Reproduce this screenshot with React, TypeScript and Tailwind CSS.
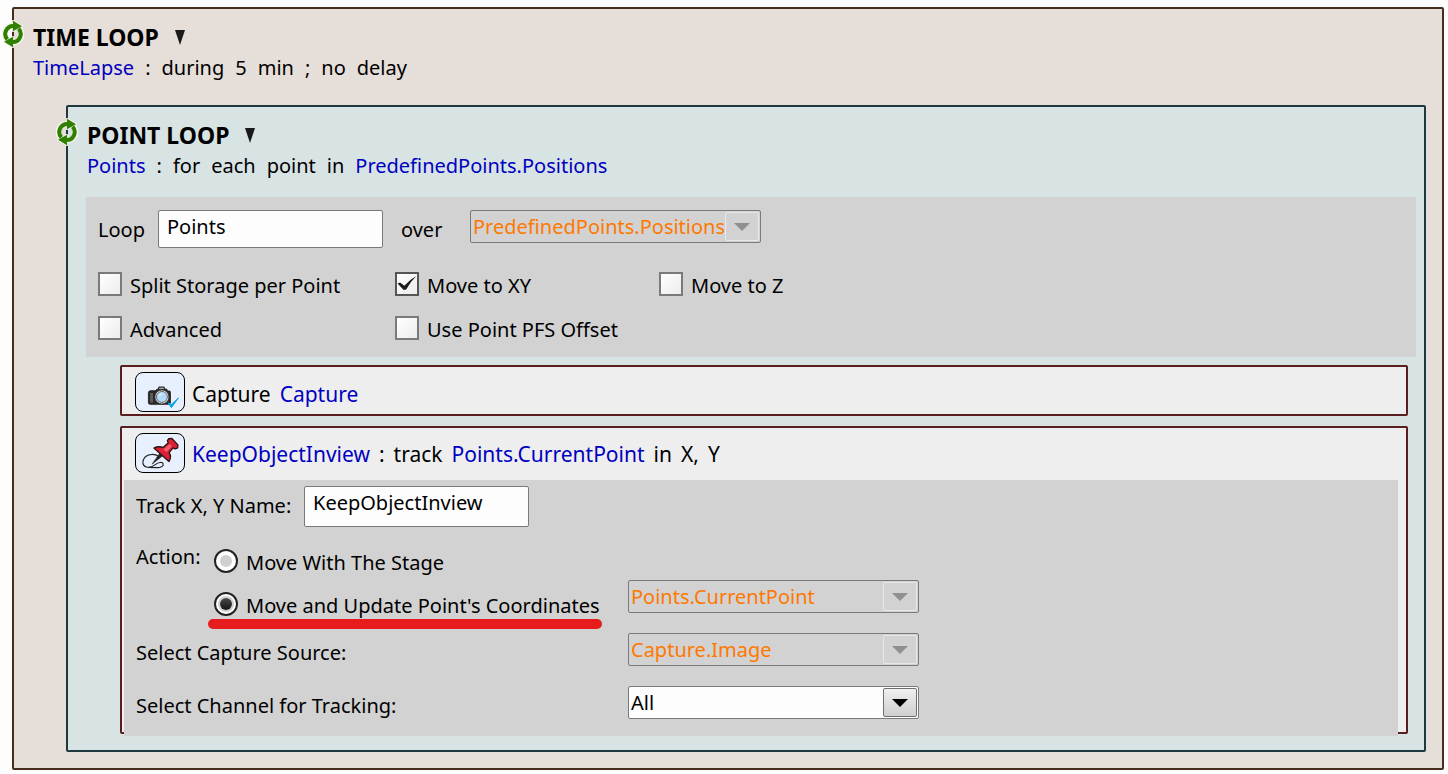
import { Fragment, useState } from "react";
import type { ReactNode } from "react";

function LoopIcon() {
  return (
    <svg viewBox="0 0 22 28" className="h-7 w-[22px]" aria-hidden="true">
      <g fill="none" stroke="#f4f6ee">
        <path d="M5 19.8 A8 8 0 0 1 11.5 6" strokeWidth="5.6" />
        <path d="M17 8.2 A8 8 0 0 1 10.5 22" strokeWidth="5.6" />
        <path d="M11 0.8 V11.2 L20 6.2 Z M11 27.2 V16.8 L2 21.8 Z" strokeWidth="1.8" strokeLinejoin="round" />
      </g>
      <g fill="none" stroke="#2f8000" strokeWidth="4">
        <path d="M5.4 19.4 A8 8 0 0 1 11.5 6" />
        <path d="M16.6 8.6 A8 8 0 0 1 10.5 22" />
      </g>
      <path d="M11 0.8 V11.2 L20 6.2 Z M11 27.2 V16.8 L2 21.8 Z" fill="#2f8000" />
    </svg>
  );
}

function CameraIcon() {
  return (
    <svg viewBox="0 0 50 40" className="h-full w-full" aria-hidden="true">
      <path d="M23 17.5 L24 14.8 H29 L30.5 17.5" fill="#e8e8e8" stroke="#222" strokeWidth="1.2" />
      <path d="M12.8 20.4 Q13 18.8 15 18.6 H20 L22 17 H32 L33.5 19 H35 Q36 19 36 20.5 V31 Q36 33 34 33 H14.6 Q12.8 33 12.8 31 Z" fill="#2b2b2b" stroke="#111" strokeWidth="0.8" />
      <path d="M14.6 21 H17.6 V31 H14.6 Z" fill="#5c5c5c" />
      <circle cx="27" cy="25.2" r="7.4" fill="#f4f4f4" stroke="#222" strokeWidth="0.8" />
      <circle cx="27" cy="25.2" r="5.8" fill="#b4d8f8" stroke="#444" strokeWidth="0.8" />
      <path d="M23.2 25 Q24 21.4 27.8 21.2 Q26 24 23.2 25 Z" fill="#e4f3ff" />
      <path d="M33.5 31.5 L37 36.5 L44.5 26.2 L37 33 Z" fill="#12a5e8" stroke="#12a5e8" strokeWidth="1" />
    </svg>
  );
}

function PinIcon() {
  return (
    <svg viewBox="0 0 50 40" className="h-full w-full" aria-hidden="true">
      <path d="M24 24 C20 20.6 12.6 20.6 9 24.6 C5.6 28.6 6.4 33.4 10.6 34.8 C14.4 36 18 34 20.4 32 C23 29.8 27.6 29 28.4 31.4 C29 34 25.4 35.6 21.6 35.4 C18.4 35.2 15.6 35.2 13.4 35.2" fill="none" stroke="#222" strokeWidth="1.2" />
      <path d="M16.6 31.8 L24.6 20.4 L27.6 23.2 Z" fill="#222" stroke="#222" strokeWidth="0.6" />
      <path d="M34.2 5 L37.5 4.6 L43.8 11.5 L43.6 14.6 L41 15.6 L38.8 14.6 L34.6 19.6 C36.8 23 36.4 26 34.4 29 L18.6 14.8 C22 13 25.4 13.2 28.2 14.2 L33.6 9.4 L32.8 7 Z" fill="#dc2135" stroke="#2a1214" strokeWidth="1.4" strokeLinejoin="round" />
      <path d="M28.5 16.5 L35 10.5 L37.5 13 L32 19 Z" fill="#f0606a" />
    </svg>
  );
}

function Words({ children }: { children: string }) {
  return (
    <>
      {children.split(" ").map((word, i) => (
        <Fragment key={i}>
          <span>{word}</span>{" "}
        </Fragment>
      ))}
    </>
  );
}

function Name({ children }: { children: ReactNode }) {
  return <span className="text-[#0000c0]">{children}</span>;
}

function LoopHeader({ title, children }: { title: string; children: ReactNode }) {
  return (
    <header>
      <div className="absolute top-[11px] -left-3">
        <LoopIcon />
      </div>
      <div className="flex items-center gap-4">
        <h2 className="text-[23px] leading-[30px] font-bold">{title}</h2>
        <button type="button" aria-label={"Toggle " + title}>
          <svg viewBox="0 0 10 15" className="h-[15px] w-2.5" aria-hidden="true">
            <path d="M0 0 H10 L5 15 Z" fill="#1a1a1a" />
          </svg>
        </button>
      </div>
      <p className="mt-px flex gap-[11px] leading-[30px]">{children}</p>
    </header>
  );
}

function Check({ label, initial = false }: { label: string; initial?: boolean }) {
  const [on, setOn] = useState(initial);
  return (
    <label className="flex h-6 items-center gap-2">
      <span className="relative h-6 w-6 shrink-0">
        <input
          type="checkbox"
          checked={on}
          onChange={() => setOn(!on)}
          className="block h-6 w-6 appearance-none border-2 border-[#7a7a7a] bg-linear-to-br from-white to-[#ececec] checked:border-[#555]"
        />
        {on && (
          <svg viewBox="0 0 24 24" className="pointer-events-none absolute inset-0 h-6 w-6" aria-hidden="true">
            <path d="M2.6 11.6 L5 10.4 L9.4 13.8 Q14 8 21.4 4 Q15 10 11 17.8 H8.4 Z" fill="#1a1a1a" />
          </svg>
        )}
      </span>
      <span className="pt-1 whitespace-nowrap">{label}</span>
    </label>
  );
}

function Radio({ label, checked, onSelect }: { label: string; checked: boolean; onSelect: () => void }) {
  return (
    <label className="flex h-6 items-center gap-2">
      <span className="relative h-6 w-6 shrink-0">
        <input
          type="radio"
          name="action"
          checked={checked}
          onChange={onSelect}
          className="block h-6 w-6 appearance-none rounded-full border-2 border-[#222] bg-white"
        />
        <span
          className={
            checked
              ? "pointer-events-none absolute inset-1.5 rounded-full bg-linear-to-b from-[#4a4a4a] to-[#161616] ring-2 ring-[#d0d0d0]"
              : "pointer-events-none absolute inset-1.5 rounded-full bg-[#d0d0d0]"
          }
        />
      </span>
      <span className="pt-1 whitespace-nowrap">{label}</span>
    </label>
  );
}

function Combo({ label, value, disabled = false }: { label: string; value: string; disabled?: boolean }) {
  return (
    <div className="relative h-[33px] w-[291px] shrink-0">
      <select
        aria-label={label}
        disabled={disabled}
        className="block h-full w-full appearance-none rounded-xs border border-[#7a7a7a] bg-[#fdfdfd] pt-px pr-9 pl-0.5 text-black opacity-100 disabled:bg-transparent disabled:text-[#ff7800]"
      >
        <option>{value}</option>
      </select>
      <span
        className={
          disabled
            ? "pointer-events-none absolute inset-y-0.5 right-0.5 flex w-[34px] items-center justify-center rounded-xs border border-[#e8e8e8] text-[#909090]"
            : "pointer-events-none absolute inset-y-0.5 right-0.5 flex w-[34px] items-center justify-center rounded-xs border border-[#707070] bg-linear-to-b from-[#f0f0f0] to-[#cfcfcf] text-black"
        }
      >
        <svg viewBox="0 0 16 8" className="h-2 w-4" aria-hidden="true">
          <path d="M0 0 H16 L8 8 Z" fill="currentColor" />
        </svg>
      </span>
    </div>
  );
}

function StepIcon({ children }: { children: ReactNode }) {
  return (
    <span className="h-10 w-[50px] shrink-0 overflow-hidden rounded-lg border border-black bg-[#e8f0fe]">
      {children}
    </span>
  );
}

export default function App() {
  const [action, setAction] = useState("update");
  return (
    <div className="min-h-screen bg-[#fdfdfd] pt-[7px] pr-1 pb-1 pl-3 font-['Noto_Sans',sans-serif] text-[20px] leading-6 text-black">
      <section className="relative rounded-xs border-2 border-[#472e1c] bg-[#e6ded8] pr-4 pb-4 pl-[52px]">
        <div className="-ml-[33px] pt-[13px] pb-[22px]">
          <LoopHeader title="TIME LOOP">
            <Name>TimeLapse</Name> <Words>: during 5 min ; no delay</Words>
          </LoopHeader>
        </div>

        <section className="relative rounded-xs border-2 border-[#1e3a40] bg-[#d8e3e4] pr-2 pb-4 pl-[18px]">
          <div className="pt-[13px] pb-4 pl-px">
            <LoopHeader title="POINT LOOP">
              <Name>Points</Name> <Words>: for each point in</Words>
              <Name>PredefinedPoints.Positions</Name>
            </LoopHeader>
          </div>

          <div className="bg-[#d2d2d2] px-3 pt-[13px] pb-[17px]">
            <div className="flex items-start">
              <label htmlFor="loop-name" className="w-[60px] pt-2">Loop</label>
              <input
                id="loop-name"
                defaultValue="Points"
                className="h-[38px] w-[225px] rounded-xs border border-[#7a7a7a] bg-[#fdfdfd] px-2 pb-1.5"
              />
              <span className="w-[87px] pt-2 pl-[18px]">over</span>
              <Combo label="over" value="PredefinedPoints.Positions" disabled />
            </div>
            <div className="mt-6 grid grid-cols-[297px_264px_1fr] gap-y-5">
              <Check label="Split Storage per Point" />
              <Check label="Move to XY" initial />
              <Check label="Move to Z" />
              <Check label="Advanced" />
              <Check label="Use Point PFS Offset" />
            </div>
          </div>

          <div className="mt-2 mr-2 ml-[34px] flex flex-col gap-2.5">
            <section className="flex items-center gap-[7px] rounded-xs border-2 border-[#5a1e1e] bg-[#eee] px-[13px] pt-[5px] pb-0.5">
              <StepIcon><CameraIcon /></StepIcon>
              <p className="flex gap-[9px] pt-1 text-[21px]">
                <span>Capture</span> <Name>Capture</Name>
              </p>
            </section>

            <section className="rounded-xs border-2 border-[#5a1e1e] bg-[#eee] pr-2 pl-0.5">
              <div className="flex items-center gap-[7px] px-[11px] pt-[5px] pb-[7px]">
                <StepIcon><PinIcon /></StepIcon>
                <p className="flex gap-[9px] pt-0.5 text-[21px]">
                  <Name>KeepObjectInview</Name> <Words>: track</Words>
                  <Name>Points.CurrentPoint</Name> <Words>in X, Y</Words>
                </p>
              </div>

              <div className="-mb-1 bg-[#d2d2d2] px-3 pt-1.5 pb-[17px]">
                <div className="flex items-start">
                  <label htmlFor="track-name" className="w-[168px] pt-2 whitespace-nowrap">Track X, Y Name:</label>
                  <input
                    id="track-name"
                    defaultValue="KeepObjectInview"
                    className="h-[41px] w-[225px] rounded-xs border border-[#7a7a7a] bg-[#fdfdfd] px-2 pb-2"
                  />
                </div>

                <div className="mt-[18px] flex">
                  <span className="w-[78px]">Action:</span>
                  <div className="flex w-[414px] flex-col gap-[19px] pt-1" role="radiogroup" aria-label="Action">
                    <Radio label="Move With The Stage" checked={action === "stage"} onSelect={() => setAction("stage")} />
                    <div className="relative">
                      <Radio
                        label="Move and Update Point's Coordinates"
                        checked={action === "update"}
                        onSelect={() => setAction("update")}
                      />
                      <div className="absolute top-[27px] -left-1.5 h-2.5 w-[394px] rounded-full bg-[#e61c1c]" />
                    </div>
                  </div>
                  <div className="self-end pb-[3px]">
                    <Combo label="Point to update" value="Points.CurrentPoint" disabled />
                  </div>
                </div>

                <div className="mt-[17px] flex items-center">
                  <span className="w-[492px] pt-1.5">Select Capture Source:</span>
                  <Combo label="Select Capture Source" value="Capture.Image" disabled />
                </div>
                <div className="mt-5 flex items-center">
                  <span className="w-[492px] pt-1.5">Select Channel for Tracking:</span>
                  <Combo label="Select Channel for Tracking" value="All" />
                </div>
              </div>
            </section>
          </div>
        </section>
      </section>
    </div>
  );
}
